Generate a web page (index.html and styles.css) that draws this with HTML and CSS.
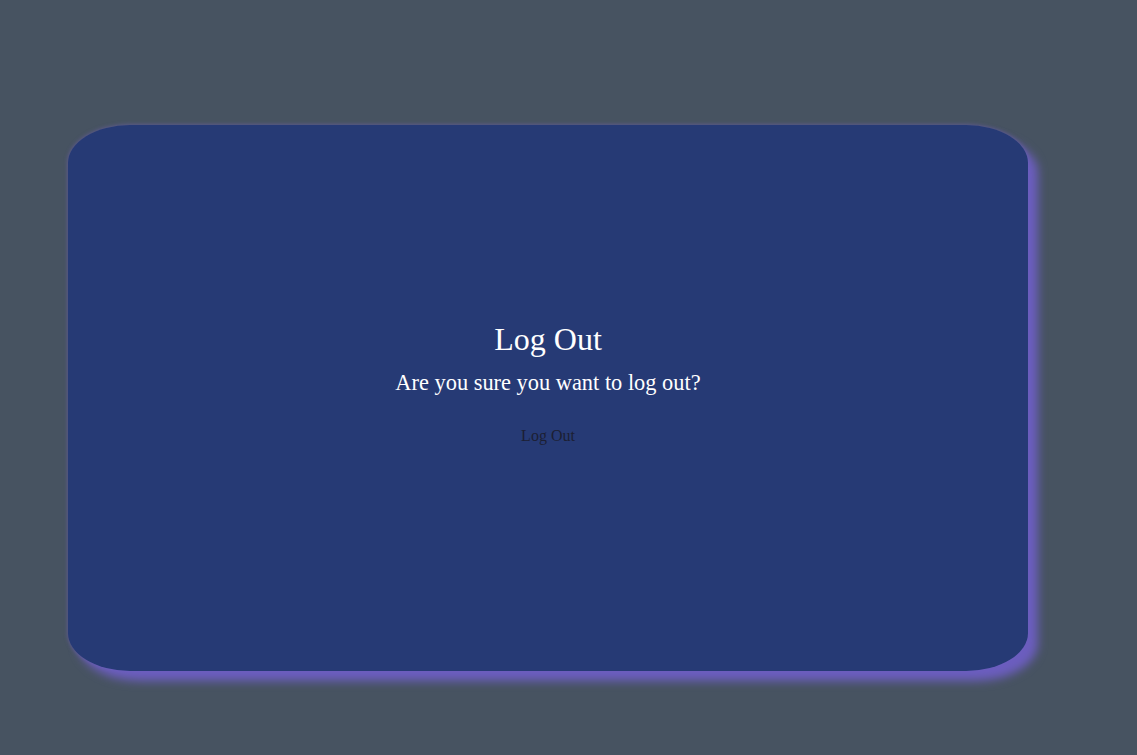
FILE: index.html
```html
<!DOCTYPE html>
<html>
<head>
<meta charset="utf-8">
<link rel="stylesheet" href="styles.css">
</head>
<body>
<div class="page">
  <div class="card">
    <h1 class="title">Log Out</h1>
    <p class="subtitle">Are you sure you want to log out?</p>
    <button class="logout-btn">Log Out</button>
  </div>
</div>
</body>
</html>
```
FILE: styles.css
```css
html, body {
  margin: 0;
  padding: 0;
  background: #475361;
  height: 100%;
}
.page {
  padding: 125px 0 0 68px;
  font-family: "Liberation Serif", "Times New Roman", serif;
}
.card {
  box-sizing: border-box;
  width: 960px;
  height: 546px;
  background: #263a75;
  border-radius: 62px / 38px;
  box-shadow: 10px 10px 10px #6c5ebf, 0 0 4px rgba(120, 100, 200, 0.6);
  display: flex;
  flex-direction: column;
  align-items: center;
  padding-top: 196px;
  color: #ffffff;
}
.title {
  margin: 0;
  font-size: 32px;
  font-weight: normal;
  line-height: 37px;
}
.subtitle {
  margin: 12px 0 0 0;
  font-size: 22.4px;
  line-height: 26px;
}
.logout-btn {
  margin-top: 31px;
  background: transparent;
  border: none;
  padding: 0;
  font-family: "Liberation Serif", "Times New Roman", serif;
  font-size: 16px;
  line-height: 18px;
  color: #1c1f33;
  cursor: pointer;
}
```
